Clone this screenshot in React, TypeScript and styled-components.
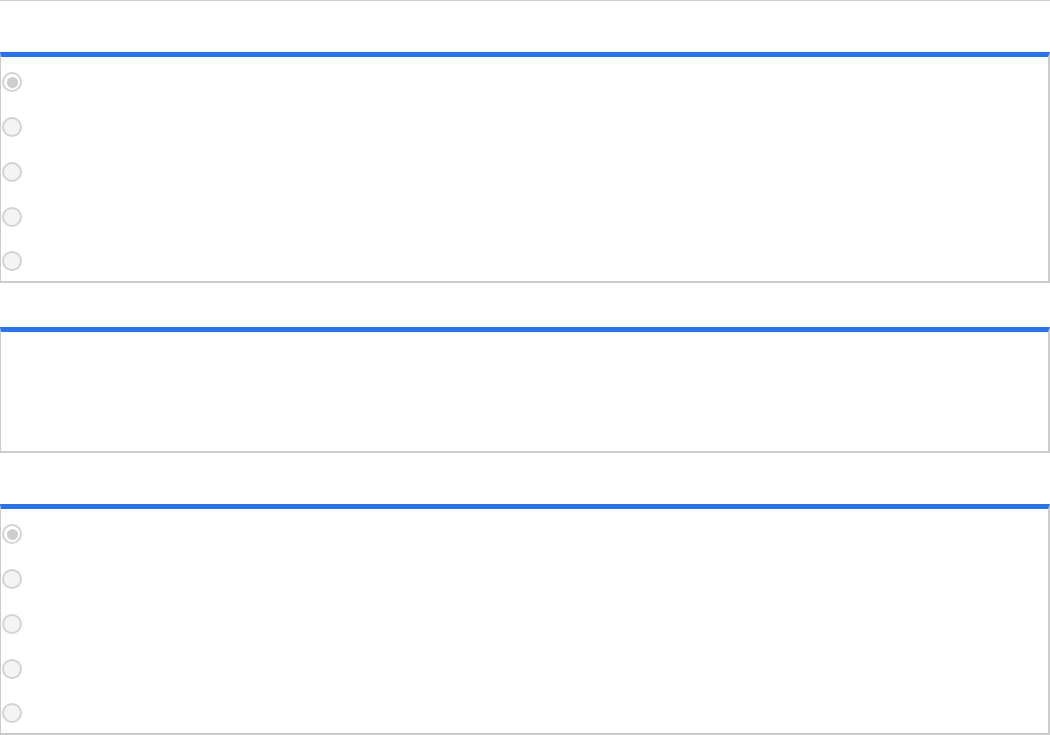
import React from "react";
import styled, { createGlobalStyle } from "styled-components";

const GlobalStyle = createGlobalStyle`
  html, body {
    margin: 0;
    padding: 0;
    background: #fff;
    font-family: "Liberation Sans", Arial, sans-serif;
  }
`;

const Page = styled.div`
  width: 1050px;
  border-top: 1px solid #cfcfcf;
  display: flex;
  flex-direction: column;
`;

const Panel = styled.section<{ $gap: number; $height: number }>`
  box-sizing: border-box;
  margin-top: ${(p) => p.$gap}px;
  border-top: 5px solid #2a74e6;
  border-left: 1px solid #cccccc;
  border-right: 2px solid #cccccc;
  border-bottom: 2px solid #cccccc;
  height: ${(p) => p.$height}px;
  overflow: hidden;
  display: flex;
  flex-direction: column;
  padding-top: 3px;
`;

const Row = styled.div`
  flex: 0 0 44.75px;
  display: flex;
  align-items: center;
  padding-left: 1px;
`;

const Radio = styled.span<{ $checked?: boolean }>`
  position: relative;
  box-sizing: border-box;
  width: 20px;
  height: 20px;
  border-radius: 50%;
  border: 2px solid #d3d3d3;
  background: ${(p) => (p.$checked ? "#fff" : "#f4f4f4")};

  &::after {
    content: "";
    display: ${(p) => (p.$checked ? "block" : "none")};
    position: absolute;
    left: 2.5px;
    top: 2.5px;
    width: 11px;
    height: 11px;
    border-radius: 50%;
    background: #cdcdcd;
  }
`;

const RadioList: React.FC = () => (
  <>
    {[0, 1, 2, 3, 4].map((i) => (
      <Row key={i}>
        <Radio $checked={i === 0} />
      </Row>
    ))}
  </>
);

export default function App() {
  return (
    <Page>
      <GlobalStyle />
      <Panel $gap={51} $height={231}>
        <RadioList />
      </Panel>
      <Panel $gap={44} $height={126} />
      <Panel $gap={51} $height={231}>
        <RadioList />
      </Panel>
    </Page>
  );
}
